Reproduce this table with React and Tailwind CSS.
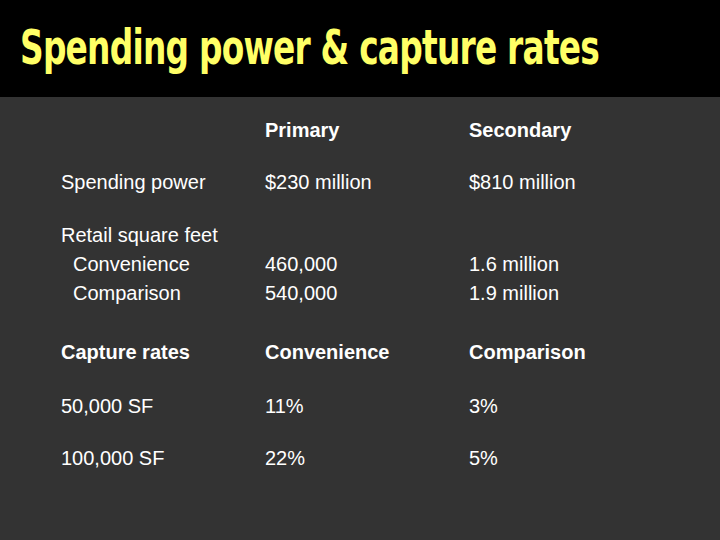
import React from "react";

const rows = [
	{ cells: ["", "Primary", "Secondary"], bold: true, mt: "mt-[19px]" },
	{ cells: ["Spending power", "$230 million", "$810 million"], mt: "mt-[23px]" },
	{
		cells: [
			<>
				Retail square feet
				<br />
				<span className="pl-3">Convenience</span>
				<br />
				<span className="pl-3">Comparison</span>
			</>,
			<>
				<br />
				460,000
				<br />
				540,000
			</>,
			<>
				<br />
				1.6 million
				<br />
				1.9 million
			</>,
		],
		mt: "mt-[24px]",
	},
	{ cells: ["Capture rates", "Convenience", "Comparison"], bold: true, mt: "mt-[30px]" },
	{ cells: ["50,000 SF", "11%", "3%"], mt: "mt-[25px]" },
	{ cells: ["100,000 SF", "22%", "5%"], mt: "mt-[23px]" },
];

export default function App() {
	return (
		<div className="w-[720px] h-[540px] bg-[#333333] flex flex-col overflow-hidden">
			<div className="h-[97px] bg-black flex items-center pl-[20px] pb-[4px]">
				<h1
					className="text-[#ffff66] text-[48px] font-bold leading-none tracking-[-1px] whitespace-nowrap origin-left scale-x-[0.76]"
					style={{ fontFamily: '"DejaVu Sans Condensed", "Liberation Sans Narrow", sans-serif' }}
				>
					Spending power &amp; capture rates
				</h1>
			</div>
			<div
				className="pl-[61px] text-white text-[20px] leading-[29px]"
				style={{ fontFamily: '"Liberation Sans", Arial, sans-serif' }}
			>
				{rows.map((row, i) => (
					<div key={i} className={`grid grid-cols-[204px_204px_204px] ${row.mt} ${row.bold ? "font-bold" : ""}`}>
						{row.cells.map((c, j) => (
							<div key={j} className="whitespace-nowrap">{c}</div>
						))}
					</div>
				))}
			</div>
		</div>
	);
}
